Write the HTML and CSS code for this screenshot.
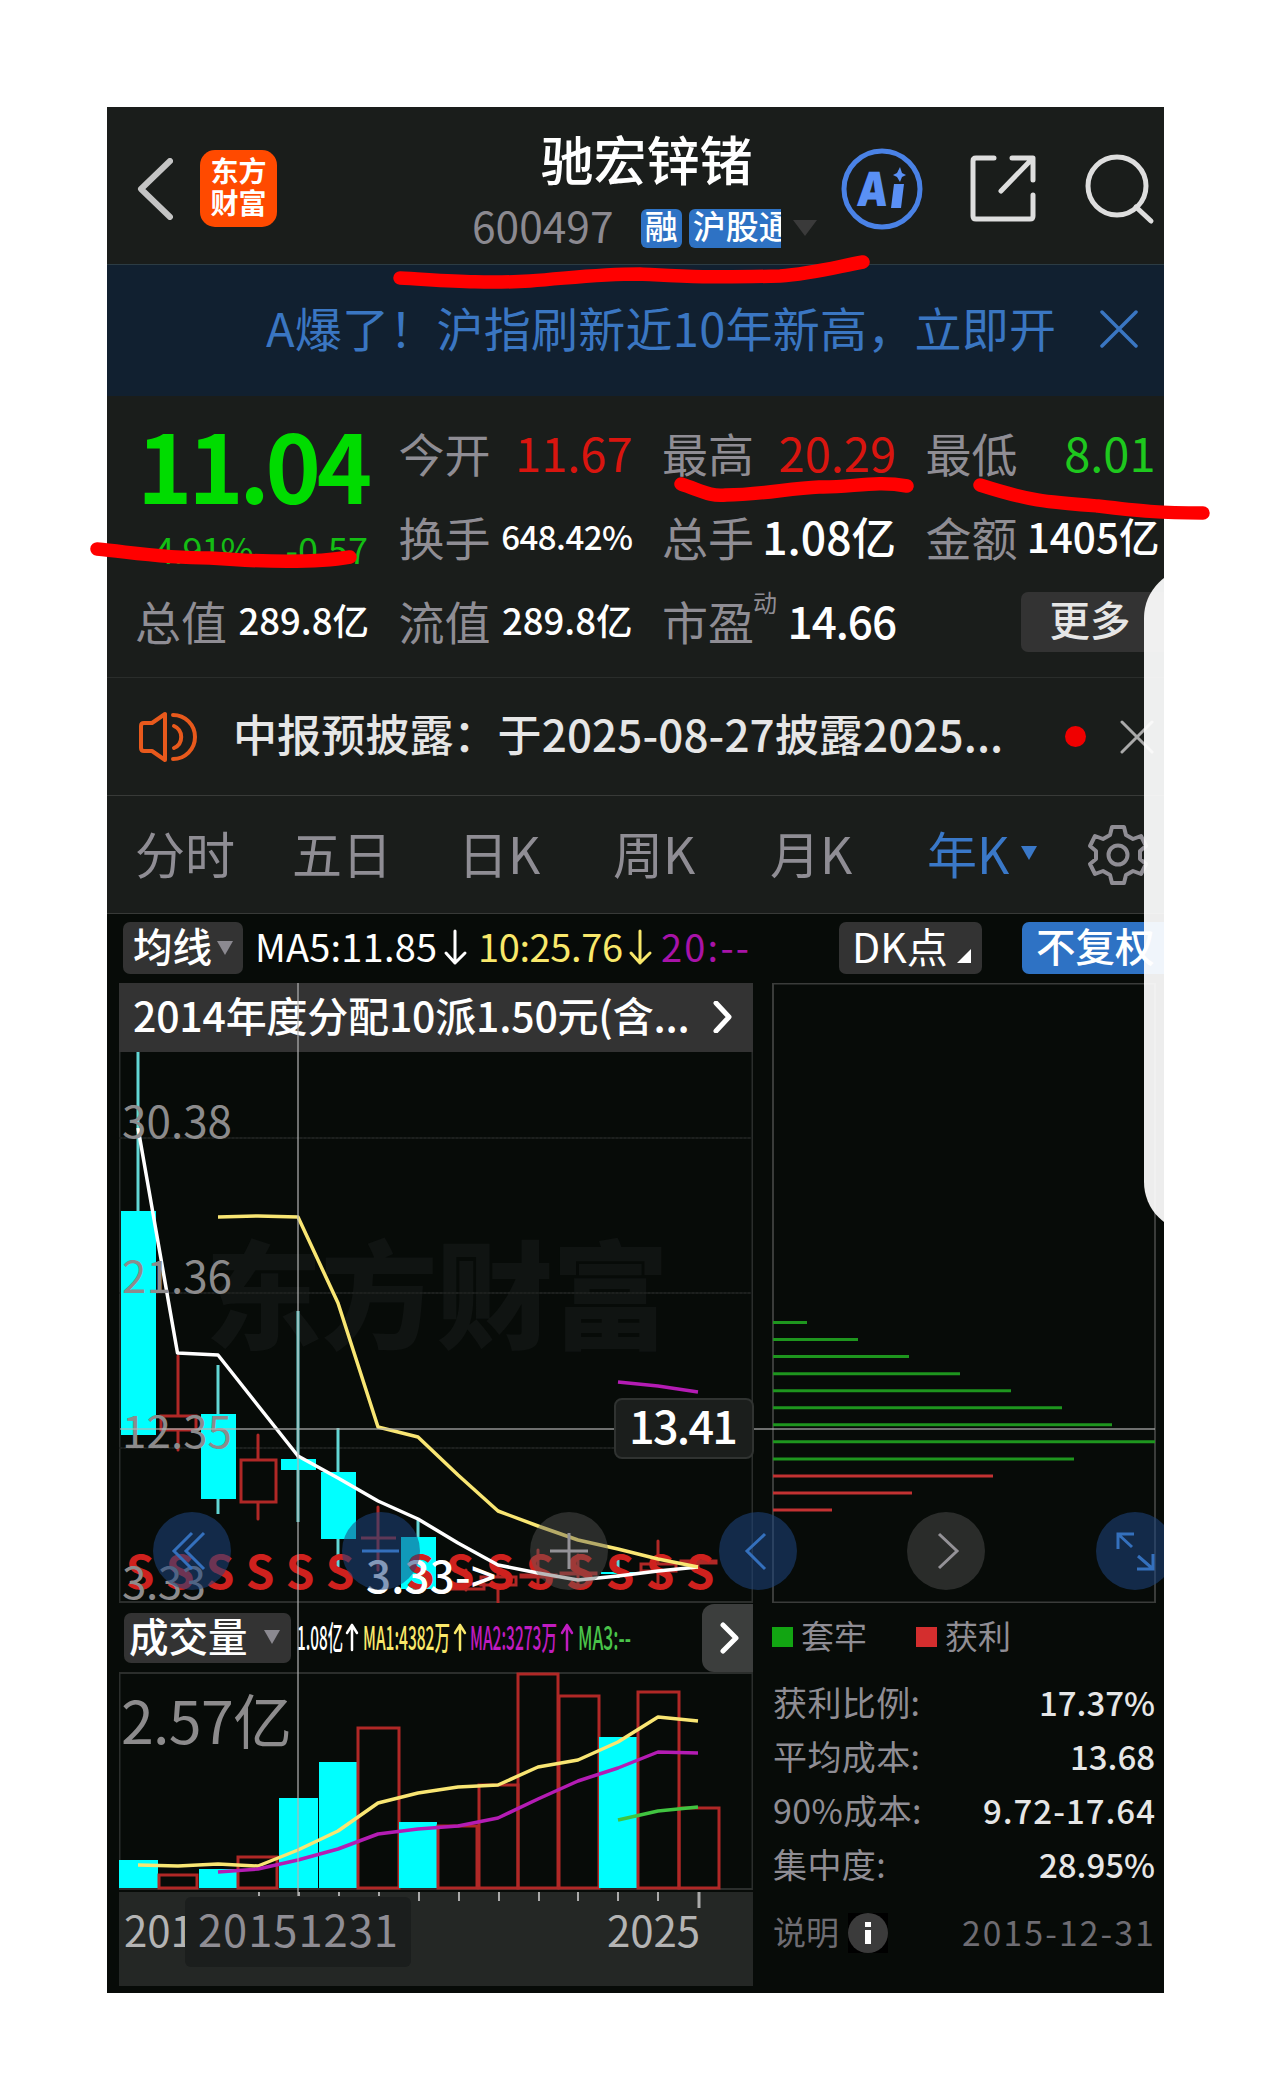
FILE: index.html
```html
<!DOCTYPE html>
<html lang="zh-CN">
<head>
  <meta charset="UTF-8">
  <meta name="viewport" content="width=device-width, initial-scale=1.0">
  <title>驰宏锌锗 600497</title>
  <link rel="stylesheet" href="styles.css">
</head>
<body>

  <div class="phone">
    <header class="header">
      <svg class="back" width="36" height="62" viewBox="0 0 36 62"><path d="M33 3L4 31L33 59"/></svg>
      <div class="logo"><span>东方</span><span>财富</span></div>
      <div class="stock">
        <h1>驰宏锌锗</h1>
        <div class="stock-info">
          <span class="code">600497</span>
          <span class="badge">融</span>
          <span class="badge badge-cut">沪股通</span>
          <i class="tri tri-dark"></i>
        </div>
      </div>
      <svg class="ai" width="82" height="82" viewBox="0 0 82 82">
        <circle cx="41" cy="41" r="38"/>
        <text x="20" y="58" textLength="31" lengthAdjust="spacingAndGlyphs" transform="skewX(-5)">A</text>
        <path d="M53 36L63 36L60 60L50 60ZM59 19L61 25L65 27L61 29L59 34L56 29L52 27L56 25Z"/>
      </svg>
      <svg class="share" width="66" height="68" viewBox="0 0 66 68">
        <path d="M24 3H6Q3 3 3 6V61Q3 64 6 64H60Q63 64 63 61V40M42 3H63V25M62 4L31 36"/>
      </svg>
      <svg class="search" width="70" height="72" viewBox="0 0 70 72">
        <circle cx="32" cy="32" r="29"/><path d="M51 53L66 67"/>
      </svg>
    </header>

    <div class="banner">
      <span>A爆了！沪指刷新近10年新高，立即开</span>
      <svg width="38" height="38" viewBox="0 0 38 38"><path d="M2 2L36 36M36 2L2 36"/></svg>
    </div>

    <section class="quote">
      <div class="price">
        <strong>11.04</strong>
        <div class="change"><span>-4.91%</span><span>-0.57</span></div>
      </div>
      <div class="cell"><label>今开</label><b class="red s48">11.67</b></div>
      <div class="cell"><label>最高</label><b class="red s48">20.29</b></div>
      <div class="cell"><label>最低</label><b class="green s48 low">8.01</b></div>
      <div class="cell"><label>换手</label><b class="s34">648.42%</b></div>
      <div class="cell"><label>总手</label><b class="s45">1.08亿</b></div>
      <div class="cell"><label>金额</label><b class="s41">1405亿</b></div>
      <div class="cell"><label>总值</label><b class="s37">289.8亿</b></div>
      <div class="cell"><label>流值</label><b class="s37">289.8亿</b></div>
      <div class="cell"><label>市盈<sup>动</sup></label><b class="s45 pe">14.66</b></div>
      <div class="more">更多</div>
    </section>

    <div class="notice">
      <svg class="speaker" width="60" height="52" viewBox="0 0 60 52">
        <path d="M3 15Q3 12 6 12L14 12L27 3V49L14 40H6Q3 40 3 37ZM35 4A22 22 0 0 1 35 48M36 15A12 12 0 0 1 36 37"/>
      </svg>
      <span class="notice-text">中报预披露：于2025-08-27披露2025...</span>
      <i class="dot"></i>
      <svg class="notice-close" width="34" height="34" viewBox="0 0 34 34"><path d="M2 2L32 32M32 2L2 32"/></svg>
    </div>

    <nav class="tabs">
      <span>分时</span><span>五日</span><span>日K</span><span>周K</span><span>月K</span>
      <span class="active">年K</span><i class="tri tri-blue"></i>
      <svg class="gear" width="62" height="62" viewBox="-31 -31 62 62">
        <path d="M-6 -28H6L8 -20L15 -16L23 -19L28 -9L22 -4V4L28 9L23 19L15 16L8 20L6 28H-6L-8 20L-15 16L-23 19L-28 9L-22 4V-4L-28 -9L-23 -19L-15 -16L-8 -20Z"/>
        <circle r="9.5"/>
      </svg>
    </nav>

    <section class="charts">
      <div class="ma-bar">
        <span class="btn btn-ma">均线<i class="tri tri-gray"></i></span>
        <svg class="ma-values" width="500" height="60" viewBox="250 917 500 60">
          <text x="255" y="961" textLength="182">MA5:11.85</text>
          <path stroke="#fff" d="M455 930V962M446 952L455 962L465 952"/>
          <text class="t-yellow" x="478" y="961" textLength="145">10:25.76</text>
          <path stroke="#f9e86a" d="M640 930V962M631 952L640 962L650 952"/>
          <text class="t-purple" x="661" y="961" textLength="88">20:--</text>
        </svg>
        <span class="btn btn-dk">DK点<i class="corner"></i></span>
        <span class="btn btn-right">不复权</span>
      </div>

      <div class="columns">
        <div class="left">
          <div class="event">
            <span>2014年度分配10派1.50元(含...</span>
            <svg width="20" height="32" viewBox="0 0 20 32"><path d="M3 2L16 16L3 30"/></svg>
          </div>
          <svg class="kline" width="634" height="551" viewBox="119 1052 634 551">
            <text class="watermark" x="205" y="1340" textLength="464">东方财富</text>
            <path class="frame" d="M119.5 1052V1602H752.5V1052"/>
            <path class="grid" d="M120 1138H752M120 1293H752M120 1448H752"/>
            <g id="candles"></g>
            <g id="signals"></g>
            <polyline class="ma white" points="138,1128 177.500,1353 218,1355 298,1456 338,1478 378,1501 418,1519 458,1543 498,1565 538,1573 578,1580 618,1576 658,1571 698,1567"/>
            <polyline class="ma yellow" points="218,1217 258,1216 298,1217 338,1303 378,1427 418,1437 458,1475 498,1511 538,1526 578,1540 618,1549 658,1559 698,1567"/>
            <polyline class="ma purple" points="618,1382 658,1386 698,1392"/>
            <g class="scale">
              <text x="122" y="1138" textLength="110">30.38</text>
              <text x="122" y="1293" textLength="110">21.36</text>
              <text x="122" y="1448" textLength="110">12.35</text>
              <text x="122" y="1599" textLength="84">3.33</text>
            </g>
            <text class="lowest" x="366" y="1593" textLength="130">3.33-&gt;</text>
          </svg>
          <div class="vol-bar">
            <span class="btn btn-vol">成交量<i class="tri tri-gray"></i></span>
            <svg class="vol-values" width="345" height="50" viewBox="293 1613 345 50">
              <text x="296" y="1650" textLength="46" lengthAdjust="spacingAndGlyphs">1.08亿</text>
              <path stroke="#fff" d="M351 1650V1625M346 1633L351 1625L356 1633"/>
              <text class="t-yellow" x="362" y="1650" textLength="87" lengthAdjust="spacingAndGlyphs">MA1:4382万</text>
              <path stroke="#f9e86a" d="M459 1650V1625M454 1633L459 1625L464 1633"/>
              <text class="t-magenta" x="469" y="1650" textLength="87" lengthAdjust="spacingAndGlyphs">MA2:3273万</text>
              <path stroke="#c01cc0" d="M566 1650V1625M561 1633L566 1625L571 1633"/>
              <text class="t-green" x="577" y="1650" textLength="53" lengthAdjust="spacingAndGlyphs">MA3:--</text>
            </svg>
            <span class="vol-next"><svg width="20" height="32" viewBox="0 0 20 32"><path d="M3 3L16 16L3 29"/></svg></span>
          </div>
          <svg class="volume" width="634" height="219" viewBox="119 1672 634 219">
            <rect class="frame" x="119.500" y="1673" width="633" height="216"/>
            <text class="vol-max" x="121" y="1744" textLength="171">2.57亿</text>
            <g id="volumes"></g>
            <polyline class="ma yellow" points="138,1865 178,1866 218,1864 258,1866 298,1850 338,1831 378,1803 418,1793 458,1787 498,1785 538,1767 578,1760 618,1742 658,1717 698,1721"/>
            <polyline class="ma purple" points="218,1872 258,1869 298,1860 338,1849 378,1834 418,1829 458,1826 498,1818 538,1799 578,1781 618,1768 658,1752 698,1753"/>
            <polyline class="ma lime" points="618,1820 658,1811 698,1807"/>
          </svg>
          <svg class="axis" width="634" height="94" viewBox="119 1892 634 94">
            <path d="M259 1892V1896M299 1892V1896M339 1892V1896M379 1892V1896M419 1892V1901M459 1892V1901M499 1892V1901M539 1892V1901M578 1892V1901M618 1892V1901M658 1892V1901"/>
            <path class="big" d="M699 1892V1908"/>
            <text x="124" y="1947">2011</text>
            <text x="607" y="1947" textLength="93">2025</text>
            <rect x="185" y="1897" width="226" height="70" rx="6"/>
            <text class="picked" x="198" y="1947" textLength="200">20151231</text>
          </svg>
        </div>

        <div class="right">
          <svg class="chips" width="384" height="620" viewBox="772 983 384 620">
            <rect class="frame" x="773" y="983.500" width="382" height="619"/>
            <g id="chips"></g>
          </svg>
          <div class="legend">
            <i class="sq sq-green"></i><span>套牢</span>
            <i class="sq sq-red"></i><span>获利</span>
          </div>
          <dl class="stats">
            <div><dt>获利比例:</dt><dd>17.37%</dd></div>
            <div><dt>平均成本:</dt><dd>13.68</dd></div>
            <div><dt>90%成本:</dt><dd class="wide">9.72-17.64</dd></div>
            <div><dt>集中度:</dt><dd>28.95%</dd></div>
          </dl>
          <div class="explain">
            <span>说明</span>
            <svg width="40" height="40" viewBox="0 0 40 40">
              <rect width="40" height="40"/><circle cx="20" cy="20" r="20"/>
              <path d="M17 17H23V31H17ZM17 9H23V14H17Z"/>
            </svg>
            <span class="date">2015-12-31</span>
          </div>
        </div>
      </div>

      <!-- crosshair and floating buttons -->
      <svg class="overlay" width="1057" height="1080" viewBox="107 913 1057 1080">
        <path class="cross" d="M298 983V1896M120 1429H1155"/>
        <rect class="tip" x="615" y="1399" width="138" height="59" rx="7"/>
        <text x="629" y="1444" textLength="109">13.41</text>
        <g class="blue">
          <circle cx="192" cy="1551" r="39"/><path d="M192 1533L174 1551L192 1569M204 1533L186 1551L204 1569"/>
          <circle cx="381" cy="1551" r="39"/><path d="M362 1551H399"/>
          <circle cx="758" cy="1551" r="39"/><path d="M765 1534L747 1551L765 1569"/>
          <circle cx="1135" cy="1551" r="39"/><path d="M1134 1534H1118V1549M1118 1534L1132 1547M1137 1569H1153V1554M1153 1569L1138 1556"/>
        </g>
        <g class="gray">
          <circle cx="569" cy="1551" r="39"/><path d="M550 1551H588M569 1533V1569"/>
          <circle cx="946" cy="1551" r="39"/><path d="M939 1534L957 1551L939 1568"/>
        </g>
      </svg>
    </section>

    <div class="side-panel"></div>
  </div>

  <!-- red marker strokes -->
  <svg class="marks" width="1271" height="2100" viewBox="0 0 1271 2100">
    <path d="M400 278C440 280 480 284 530 281C580 277 600 274 640 274C680 276 700 278 780 276C810 274 832 268 863 262"/>
    <path d="M97 549C130 552 160 558 210 558C250 561 310 564 350 557"/>
    <path d="M681 484C700 490 710 497 726 495C760 495 790 488 819 487C850 488 875 480 907 486"/>
    <path d="M980 485C1030 501 1045 502 1098 506C1140 511 1160 513 1203 513"/>
  </svg>

  <script src="chart.js"></script>
</body>
</html>
```

FILE: styles.css
```css
* {
  box-sizing: border-box;
}

body {
  margin: 0;
  min-height: 2100px;
  padding: 107px 0 0 107px;
  background: #fff;
  font-family: "Noto Sans CJK SC", "Noto Sans", sans-serif;
  color: #fff;
}

svg {
  display: block;
  flex: none;
  fill: none;
  stroke-linecap: round;
  stroke-linejoin: round;
}

svg text {
  stroke: none;
  fill: #fff;
}

svg .t-yellow { fill: #f9e86a; }
svg .t-purple { fill: #a813a8; }
svg .t-magenta { fill: #c01cc0; }
svg .t-green { fill: #4ac44a; }

.phone {
  position: relative;
  width: 1057px;
  height: 1886px;
  overflow: hidden;
  background: #1a1d1b;
  white-space: nowrap;
}

/* header */
.header {
  display: flex;
  height: 157px;
  padding: 0 0 0 30px;
}

.back {
  margin-top: 51px;
  stroke: #c4c4c4;
  stroke-width: 6;
}

.logo {
  width: 77px;
  height: 77px;
  margin: 43px 0 0 27px;
  padding-top: 4px;
  border-radius: 15px;
  background: #ff4a00;
  font-size: 28px;
  font-weight: 700;
  line-height: 32px;
  text-align: center;
}

.logo span {
  display: block;
}

.stock {
  width: 345px;
  margin-left: 195px;
}

.stock h1 {
  margin: 20px 0 0 4px;
  font-size: 53px;
  font-weight: 500;
  line-height: 62px;
  text-align: center;
}

.stock-info {
  display: flex;
  align-items: center;
  height: 40px;
  margin-top: 19px;
}

.code {
  width: 170px;
  font-size: 42.5px;
  line-height: 40px;
  padding-bottom: 6px;
  color: #8b8990;
}

.badge {
  height: 39px;
  margin-right: 7px;
  padding: 0 4px;
  border-radius: 6px;
  background: #2e72c4;
  font-size: 33px;
  font-weight: 500;
  line-height: 32px;
}

.badge-cut {
  width: 93px;
  margin-right: 12px;
  overflow: hidden;
  border-radius: 6px 0 0 6px;
}

.tri {
  border: 8px solid transparent;
  border-top: 14px solid #8b8990;
  border-bottom: 0;
}

.tri-dark {
  border-width: 16px 12px 0;
  border-top-color: #3a3a3a;
}

.ai {
  margin: 41px 0 0 24px;
  stroke: #4a82e6;
  stroke-width: 5;
}

.ai text {
  font-family: Inter, sans-serif;
  font-size: 47px;
  font-weight: 900;
  fill: #5a90f5;
}

.ai path {
  fill: #5a90f5;
  stroke: none;
}

.share {
  margin: 48px 0 0 47px;
  stroke: #dedede;
  stroke-width: 5;
}

.search {
  margin: 47px 0 0 49px;
  stroke: #dedede;
  stroke-width: 5;
}

.banner {
  display: flex;
  align-items: center;
  height: 132px;
  padding: 0 26px 0 159px;
  border-top: 1px solid #2c3c44;
  background: #112030;
  color: #3a76c2;
  font-size: 47px;
  letter-spacing: .25px;
}

.banner span {
  margin-right: auto;
  line-height: 60px;
  padding-bottom: 8px;
}

.banner svg {
  margin-bottom: 3px;
  stroke: #3a76c2;
  stroke-width: 3.5;
}

/* quote */
.quote {
  display: grid;
  grid-template-columns: repeat(4, 234px);
  grid-auto-rows: 84px;
  column-gap: 29.5px;
  height: 281px;
  padding: 16px 0 0 28px;
}

.price {
  grid-row: span 2;
  color: #00dc00;
}

.price strong {
  display: block;
  padding-left: 2px;
  font-size: 94px;
  font-weight: 700;
  line-height: 102px;
  letter-spacing: -4.3px;
}

.change {
  display: flex;
  justify-content: space-between;
  padding: 0 1px 0 8px;
  color: #14be14;
  font-size: 36px;
  line-height: 68px;
}

.change span:first-child {
  letter-spacing: -1px;
}

.cell {
  display: flex;
  align-items: center;
  justify-content: space-between;
  padding-bottom: 5px;
}

.cell label {
  position: relative;
  color: #8f8d94;
  font-size: 46px;
}

.cell sup {
  position: absolute;
  left: 91px;
  top: 0;
  font-size: 24px;
  line-height: 30px;
}

.cell b {
  font-weight: 500;
}

.cell .red { color: #d9150f; font-weight: 400; }
.cell .green { color: #1ec81e; font-weight: 400; }
.cell .low { margin-right: 4px; }
.s48 { font-size: 47px; }
.s45 { font-size: 44.5px; }
.s41 { font-size: 40.5px; }
.s37 { font-size: 36.5px; }
.s34 { font-size: 33px; letter-spacing: -.5px; }
.cell .pe { font-size: 44px; letter-spacing: -1px; }

.more {
  width: 150px;
  height: 60px;
  margin: 12px 0 0 95px;
  padding-left: 29px;
  border-radius: 7px;
  background: #333;
  color: #e6e6e6;
  font-size: 40.5px;
  font-weight: 500;
  line-height: 54px;
}

/* notice */
.notice {
  display: flex;
  align-items: center;
  height: 118px;
  padding-left: 31px;
  border-top: 1px solid #2a2d2b;
}

.speaker {
  stroke: #e8591c;
  stroke-width: 4;
}

.notice-text {
  flex: none;
  width: 867px;
  padding: 0 0 7px 35px;
  color: #e6e6e6;
  font-size: 44px;
  font-weight: 500;
  letter-spacing: .1px;
}

.dot {
  flex: none;
  width: 21px;
  height: 21px;
  border-radius: 50%;
  background: #f00000;
}

.notice-close {
  margin-left: 34px;
  stroke: #aaa;
  stroke-width: 3;
}

.tabs {
  display: flex;
  align-items: center;
  height: 118px;
  padding-left: 28px;
  border-top: 1px solid #383a38;
  color: #8f8d94;
  font-size: 50px;
  line-height: 60px;
}

.tabs span {
  width: 157px;
  padding-bottom: 5px;
}

.tabs span:nth-child(2) { width: 166px; }
.tabs span:nth-child(3) { width: 155px; }

.tabs .active {
  width: 94px;
  color: #3a78c8;
}

.tri-blue {
  margin-bottom: 3px;
  border-top-color: #3a78c8;
}

.gear {
  margin-left: 50px;
  stroke: #8f8d94;
  stroke-width: 4;
}

/* charts */
.charts {
  position: relative;
  height: 1080px;
  border-top: 1px solid #383a38;
  background: #070b08;
}

.ma-bar {
  display: flex;
  align-items: center;
  height: 69px;
  padding: 0 0 1px 16px;
}

.btn {
  display: flex;
  align-items: center;
  flex: none;
  height: 52px;
  border-radius: 7px;
  background: #333;
  font-size: 39.5px;
  font-weight: 500;
  line-height: 46px;
  padding-bottom: 6px;
}

.btn-ma {
  width: 120px;
  padding-left: 10px;
}

.btn .tri {
  margin: 5px 0 0 5px;
}

.ma-values {
  margin-left: 7px;
  font-size: 38px;
  font-weight: 400;
  stroke-width: 3;
}

.btn-dk {
  width: 143px;
  margin-left: 89px;
  padding-left: 13px;
  font-weight: 400;
  font-size: 41px;
}

.corner {
  margin: 22px 0 0 9px;
  border-left: 14px solid transparent;
  border-bottom: 14px solid #fff;
}

.btn-right {
  width: 150px;
  margin-left: 40px;
  padding-left: 14px;
  background: #2e72c4;
}

.columns {
  display: flex;
  gap: 19px;
  padding-left: 12px;
}

.left {
  width: 634px;
}

.event {
  display: flex;
  align-items: center;
  justify-content: space-between;
  height: 69px;
  padding: 0 20px 0 14px;
  background: #333;
  font-size: 41px;
  font-weight: 500;
  letter-spacing: -.2px;
}

.event span {
  line-height: 60px;
  padding-bottom: 7px;
}

.event svg, .vol-next svg {
  stroke: #fff;
  stroke-width: 5;
}

.event svg {
  margin-bottom: 2px;
}

.frame {
  stroke: #2b2e2c;
  stroke-width: 2;
}

.chips .frame {
  stroke: #3a3c3a;
}

.grid {
  stroke: #1d201e;
  stroke-width: 2;
  stroke-dasharray: 2 2;
}

.watermark {
  font-size: 117px;
  font-weight: 900;
}

.kline .watermark { fill: #101412; }

.ma { stroke-width: 3.5; stroke-linecap: butt; }
.white { stroke: #fff; }
.yellow { stroke: #f9e673; }
.purple { stroke: #b41cb4; }
.lime { stroke: #40c440; }

.up { stroke: #b02826; stroke-width: 3; stroke-linejoin: miter; }
.down { fill: #00ffff; }
.down-line { stroke: #62d6d4; stroke-width: 3; stroke-linecap: butt; }

.scale text {
  fill: #8c8b8c;
  font-size: 44px;
}

.volume .vol-max {
  fill: #8c8b8c;
  font-size: 59px;
}

.kline .signal {
  fill: #cf211e;
  font-size: 46px;
  font-weight: 700;
  text-anchor: middle;
}

.lowest {
  font-size: 44px;
  font-weight: 500;
}

.vol-bar {
  display: flex;
  align-items: center;
  height: 69px;
  padding-left: 5px;
}

.btn-vol {
  width: 167px;
  height: 50px;
  padding-left: 5px;
}

.btn-vol .tri {
  margin-left: 16px;
}

.vol-values {
  margin-left: 3px;
  font-size: 33px;
  font-weight: 500;
  stroke-width: 2.5;
}

.vol-next {
  display: flex;
  align-items: center;
  width: 51px;
  height: 68px;
  margin-left: auto;
  padding-left: 18px;
  border-radius: 12px 0 0 12px;
  background: #3c3e3d;
}

.axis {
  margin-top: 1px;
  background: #242725;
  font-size: 42px;
  stroke: #aaa;
  stroke-width: 2;
  stroke-linecap: butt;
}

.axis text { fill: #b4b4b4; }
.axis rect { fill: #1b1e1d; stroke: none; }
.axis .picked { fill: #8f8d94; font-size: 43.5px; }
.axis .big { stroke-width: 3; }

.chips path {
  stroke-width: 3;
  stroke-linecap: butt;
}

.chip-green { stroke: #1e961e; }
.chip-red { stroke: #c33232; }

.legend {
  display: flex;
  align-items: center;
  height: 68px;
  font-size: 33px;
  line-height: 44px;
  color: #8f8d94;
}

.legend span {
  width: 123px;
  padding: 0 0 4px 8px;
}

.sq {
  width: 21px;
  height: 20px;
}

.sq-green { background: #12a512; }
.sq-red { background: #d42e2e; }

.stats {
  margin: 6px 0 0;
  font-size: 34px;
}

.stats div {
  display: flex;
  justify-content: space-between;
  height: 54px;
  padding: 0 1px 0 1px;
  line-height: 50px;
}

.stats dt {
  color: #8f8d94;
  letter-spacing: .4px;
}

.stats dd {
  margin: 0;
  color: #e6e6e6;
  font-size: 33px;
  font-weight: 500;
}

.stats .wide {
  letter-spacing: 1px;
  margin-right: -1px;
}

.explain {
  display: flex;
  align-items: center;
  height: 50px;
  margin-top: 15px;
  padding-left: 1px;
  color: #6e6c72;
  font-size: 33px;
  line-height: 44px;
}

.explain span {
  padding-bottom: 4px;
}

.explain svg { margin-left: 9px; }
.explain rect { fill: #000; }
.explain circle { fill: #3b3b3b; }
.explain path { fill: #fff; }

.explain .date {
  margin: 0 0 0 auto;
  padding-bottom: 2px;
  font-size: 33.5px;
  letter-spacing: 2.2px;
}

.overlay {
  position: absolute;
  left: 0;
  top: -1px;
  stroke-width: 3;
  stroke-linecap: butt;
  stroke-linejoin: miter;
}

.overlay text { font-size: 45px; font-weight: 500; }
.overlay .cross { stroke: #b4b4b4; stroke-opacity: .6; stroke-width: 2; }
.overlay .tip { fill: #1b1e1c; stroke: #303331; stroke-width: 2; }
.blue circle { fill: #1e4680; fill-opacity: .55; }
.blue path { stroke: #3470bd; }
.gray circle { fill: #5a5a5a; fill-opacity: .42; }
.gray path { stroke: #949297; }

.side-panel {
  position: absolute;
  left: 1037px;
  top: 461px;
  width: 200px;
  height: 664px;
  border-radius: 50px;
  background: rgba(255, 255, 255, .93);
}

.marks {
  position: absolute;
  left: 0;
  top: 0;
  stroke: #ff0000;
  stroke-width: 13.5;
}
```

FILE: chart.js
```js
// yearly candles: center x, high, top of body, bottom of body, low, type
const candles = [
  [138, 1052, 1211, 1435, 1435, 'down'],
  [178, 1356, 1416, 1430, 1450, 'up'],
  [218, 1365, 1414, 1499, 1514, 'down'],
  [258, 1435, 1460, 1502, 1519, 'up'],
  [298, 1311, 1459, 1470, 1522, 'down'],
  [338, 1428, 1472, 1539, 1567, 'down'],
  [378, 1507, 1538, 1538, 1570, 'up'],
  [418, 1520, 1537, 1589, 1593, 'down'],
  [466, 1570, 1584, 1589, 1590, 'up'],
  [498, 1570, 1577, 1585, 1603, 'up'],
  [538, 1550, 1575, 1577, 1588, 'up'],
  [578, 1555, 1573, 1574, 1588, 'up'],
  [618, 1560, 1572, 1574, 1578, 'down'],
  [658, 1541, 1564, 1571, 1588, 'up'],
  [698, 1556, 1561, 1563, 1570, 'up']
];

// volume bars: left, right, top, type
const volumes = [
  [119, 158, 1860, 'down'], [159, 197, 1875, 'up'], [199, 237, 1869, 'down'],
  [238, 277, 1857, 'up'], [279, 318, 1798, 'down'], [319, 357, 1762, 'down'],
  [358, 399, 1728, 'up'], [399, 437, 1822, 'down'], [438, 477, 1826, 'up'],
  [479, 518, 1785, 'up'], [518, 558, 1674, 'up'], [559, 599, 1696, 'up'],
  [599, 637, 1737, 'down'], [638, 679, 1692, 'up'], [679, 719, 1808, 'up']
];

const chipEnds = [807, 858, 909, 960, 1011, 1062, 1112, 1155, 1074, 993, 912, 832];

let html = '';
for (const [x, high, top, bottom, low, type] of candles) {
  if (type === 'down') {
    html += `<rect class="down" x="${x - 17}" y="${top}" width="35" height="${bottom - top}"/>`;
    html += `<path class="down-line" d="M${x} ${high}V${top}M${x} ${bottom}V${low}"/>`;
  } else {
    html += `<path class="up" d="M${x} ${high}V${top}M${x} ${bottom}V${low}M${x - 17} ${top}H${x + 18}V${bottom}H${x - 17}Z"/>`;
  }
}
document.getElementById('candles').innerHTML = html;

html = '';
for (let i = 0; i < 15; i++) {
  if (i === 6) continue; // covered by the lowest price label
  html += `<text class="signal" x="${140 + i * 40}" y="1589">S</text>`;
}
document.getElementById('signals').innerHTML = html;

html = '';
for (const [left, right, top, type] of volumes) {
  const cls = type === 'down' ? 'down' : 'up';
  html += `<rect class="${cls}" x="${left}" y="${top}" width="${right - left}" height="${1888 - top}"/>`;
}
document.getElementById('volumes').innerHTML = html;

document.getElementById('chips').innerHTML = chipEnds.map((end, i) =>
  `<path class="${i < 9 ? 'chip-green' : 'chip-red'}" d="M773 ${1322.5 + i * 17.05}H${end}"/>`
).join('');
```
